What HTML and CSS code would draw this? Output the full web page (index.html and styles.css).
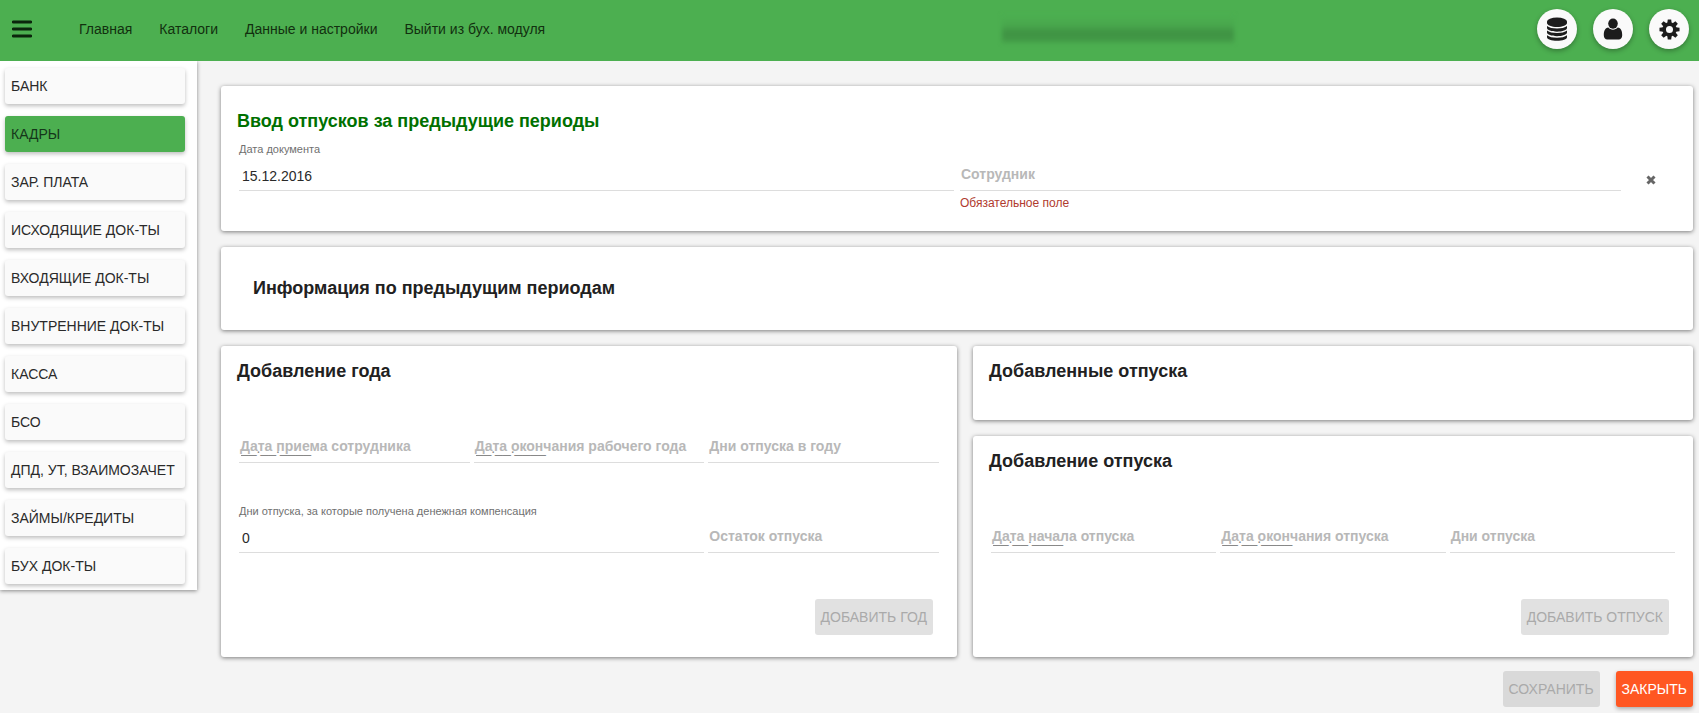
FILE: index.html
```html
<!DOCTYPE html>
<html lang="ru">
<head>
<meta charset="utf-8">
<title>Ввод отпусков за предыдущие периоды</title>
<link rel="stylesheet" href="styles.css">
</head>
<body>
<header class="topbar">
  <button class="menu-button" type="button" aria-label="Меню">
    <svg viewBox="0 0 20 18" width="20" height="18"><path d="M1.200 2h17.600M1.200 9h17.600M1.200 16h17.600" stroke="currentColor" stroke-width="3" stroke-linecap="round"/></svg>
  </button>
  <nav class="topnav">
    <a href="#">Главная</a>
    <a href="#">Каталоги</a>
    <a href="#">Данные и настройки</a>
    <a href="#">Выйти из бух. модуля</a>
  </nav>
  <div class="account"><span class="account-blur"></span></div>
  <div class="round-buttons">
    <button class="round" type="button" aria-label="Базы данных">
      <svg viewBox="0 0 22 24" width="22" height="24"><g fill="currentColor"><ellipse cx="11" cy="4.500" rx="10" ry="4"/><path d="M1 4.500h20v1.500c0 2.200-4.500 4-10 4S1 8.200 1 6z"/><path d="M1 9c2 1.700 5.800 2.500 10 2.500S19 10.700 21 9v2c0 2-4.500 3.700-10 3.700S1 13 1 11z"/><path d="M1 13.600c2 1.700 5.800 2.500 10 2.500s8-.8 10-2.500v2c0 2-4.500 3.700-10 3.700S1 17.600 1 15.600z"/><path d="M1 18.200c2 1.700 5.800 2.500 10 2.500s8-.8 10-2.500v2c0 2-4.500 3.600-10 3.600S1 22.200 1 20.200z"/></g></svg>
    </button>
    <button class="round" type="button" aria-label="Профиль">
      <svg viewBox="0 0 20 22" width="20" height="22"><g fill="currentColor"><ellipse cx="10" cy="5.600" rx="4.800" ry="5.100"/><path d="M5.300 9.600C2 9.900.8 13.200.8 17.300c0 2.400 1.300 4.200 3.500 4.200h11.400c2.200 0 3.500-1.800 3.500-4.200 0-4.100-1.200-7.400-4.500-7.700-1.200 1.300-2.800 2.100-4.700 2.100s-3.500-.8-4.700-2.100z"/></g></svg>
    </button>
    <button class="round" type="button" aria-label="Настройки">
      <svg viewBox="0 0 22 22" width="21" height="21"><circle cx="11" cy="11" r="5.600" fill="none" stroke="currentColor" stroke-width="3.800"/><g fill="currentColor"><path id="tooth" d="M9.200.5h3.600l.5 4H8.700z"/><use href="#tooth" transform="rotate(45 11 11)"/><use href="#tooth" transform="rotate(90 11 11)"/><use href="#tooth" transform="rotate(135 11 11)"/><use href="#tooth" transform="rotate(180 11 11)"/><use href="#tooth" transform="rotate(225 11 11)"/><use href="#tooth" transform="rotate(270 11 11)"/><use href="#tooth" transform="rotate(315 11 11)"/></g></svg>
    </button>
  </div>
</header>
<div class="layout">
  <nav class="sidebar">
    <button class="side-item" type="button">БАНК</button>
    <button class="side-item active" type="button">КАДРЫ</button>
    <button class="side-item" type="button">ЗАР. ПЛАТА</button>
    <button class="side-item" type="button">ИСХОДЯЩИЕ ДОК-ТЫ</button>
    <button class="side-item" type="button">ВХОДЯЩИЕ ДОК-ТЫ</button>
    <button class="side-item" type="button">ВНУТРЕННИЕ ДОК-ТЫ</button>
    <button class="side-item" type="button">КАССА</button>
    <button class="side-item" type="button">БСО</button>
    <button class="side-item" type="button">ДПД, УТ, ВЗАИМОЗАЧЕТ</button>
    <button class="side-item" type="button">ЗАЙМЫ/КРЕДИТЫ</button>
    <button class="side-item" type="button">БУХ ДОК-ТЫ</button>
  </nav>
  <main class="content">
    <section class="card document">
      <h1 class="title primary">Ввод отпусков за предыдущие периоды</h1>
      <div class="document-row">
        <div class="field">
          <label class="float-label" for="doc-date">Дата документа</label>
          <input class="line-input" id="doc-date" type="text" value="15.12.2016">
        </div>
        <div class="field">
          <label class="inner-label" for="employee">Сотрудник</label>
          <input class="line-input" id="employee" type="text">
          <p class="error">Обязательное поле</p>
        </div>
        <button class="clear" type="button" aria-label="Очистить">
          <svg viewBox="0 0 10 10" width="10" height="10"><path d="M1.500 1.500l7 7M8.500 1.500l-7 7" stroke="currentColor" stroke-width="3"/></svg>
        </button>
      </div>
    </section>
    <section class="card periods">
      <h2 class="title">Информация по предыдущим периодам</h2>
    </section>
    <div class="columns">
      <section class="card form-card">
        <h2 class="title">Добавление года</h2>
        <div class="field-grid">
          <div class="field">
            <label class="inner-label" for="hire-date">Дата приема сотрудника</label>
            <input class="line-input mask" id="hire-date" type="text" value="__.__.____">
          </div>
          <div class="field">
            <label class="inner-label" for="year-end">Дата окончания рабочего года</label>
            <input class="line-input mask" id="year-end" type="text" value="__.__.____">
          </div>
          <div class="field">
            <label class="inner-label" for="year-days">Дни отпуска в году</label>
            <input class="line-input" id="year-days" type="text">
          </div>
          <div class="field wide">
            <label class="float-label" for="compensated">Дни отпуска, за которые получена денежная компенсация</label>
            <input class="line-input" id="compensated" type="text" value="0">
          </div>
          <div class="field">
            <label class="inner-label" for="rest">Остаток отпуска</label>
            <input class="line-input" id="rest" type="text">
          </div>
        </div>
        <div class="card-actions"><button class="button disabled" type="button" disabled>ДОБАВИТЬ ГОД</button></div>
      </section>
      <div class="stack">
        <section class="card added">
          <h2 class="title">Добавленные отпуска</h2>
        </section>
        <section class="card form-card">
          <h2 class="title">Добавление отпуска</h2>
          <div class="field-grid">
            <div class="field">
              <label class="inner-label" for="leave-start">Дата начала отпуска</label>
              <input class="line-input mask" id="leave-start" type="text" value="__.__.____">
            </div>
            <div class="field">
              <label class="inner-label" for="leave-end">Дата окончания отпуска</label>
              <input class="line-input mask" id="leave-end" type="text" value="__.__.____">
            </div>
            <div class="field">
              <label class="inner-label" for="leave-days">Дни отпуска</label>
              <input class="line-input" id="leave-days" type="text">
            </div>
          </div>
          <div class="card-actions"><button class="button disabled" type="button" disabled>ДОБАВИТЬ ОТПУСК</button></div>
        </section>
      </div>
    </div>
    <div class="page-actions">
      <button class="button save" type="button" disabled>СОХРАНИТЬ</button>
      <button class="button close" type="button">ЗАКРЫТЬ</button>
    </div>
  </main>
</div>
</body>
</html>
```
FILE: styles.css
```css
* { box-sizing: border-box; }
body {
  margin: 0;
  min-height: 100vh;
  background: #f4f4f4;
  color: #2a2a2a;
  font-family: "Liberation Sans", Arial, sans-serif;
  font-size: 14px;
}
button, input { font: inherit; color: inherit; }
button { border: 0; cursor: pointer; }

.topbar {
  display: flex;
  align-items: center;
  height: 61px;
  padding: 0 10px 3px 12px;
  background: #4caf50;
}
.menu-button {
  display: flex;
  padding: 0;
  background: none;
  color: #0b260c;
}
.topnav {
  display: flex;
  gap: 27px;
  margin-left: 47px;
}
.topnav a { color: #12300f; text-decoration: none; }
.account {
  display: flex;
  flex: 1;
  justify-content: flex-end;
  margin-right: 303px;
}
.account-blur {
  width: 232px;
  height: 28px;
  background: linear-gradient(#4caf50, #49a84d 35%, #409444 62%, #409444 78%, #46a24a);
  filter: blur(2px);
}
.round-buttons { display: flex; gap: 16px; }
.round {
  display: flex;
  align-items: center;
  justify-content: center;
  width: 40px;
  height: 40px;
  padding: 0;
  border-radius: 50%;
  background: #fafafa;
  color: #1c1c1c;
  box-shadow: 0 2px 5px rgba(0, 0, 0, .3);
}

.layout { display: flex; align-items: flex-start; }
.sidebar {
  display: flex;
  flex-direction: column;
  flex: none;
  gap: 12px;
  width: 197px;
  padding: 7px 12px 6px 5px;
  background: #fff;
  box-shadow: 0 1px 4px rgba(0, 0, 0, .45);
  clip-path: inset(0 -8px -8px 0);
}
.side-item {
  height: 36px;
  padding: 0 6px;
  border-radius: 3px;
  background: #fafafa;
  text-align: left;
  white-space: nowrap;
  box-shadow: 0 2px 4px rgba(0, 0, 0, .26);
}
.side-item.active { background: #4caf50; color: #15361a; }

.content {
  display: flex;
  flex: 1;
  flex-direction: column;
  gap: 16px;
  min-width: 0;
  padding: 25px 6px 6px 24px;
}
.card {
  border-radius: 3px;
  background: #fff;
  box-shadow: 0 1px 4px rgba(0, 0, 0, .5);
}
.title {
  margin: 0;
  color: #212121;
  font-size: 18px;
  font-weight: 700;
  line-height: 24px;
}
.title.primary { color: #007000; }
.document { padding: 23px 16px 20px; }
.document-row {
  display: grid;
  grid-template-columns: 716fr 662fr 48fr;
  gap: 6px;
  padding: 0 2px;
}
.periods { padding: 29px 32px 30px; }

.field {
  display: flex;
  position: relative;
  flex-direction: column;
  min-width: 0;
  padding-top: 28px;
}
.line-input {
  width: 100%;
  height: 30px;
  padding: 0 3px;
  border: 0;
  border-bottom: 1px solid #ddd;
  border-radius: 0;
  background: transparent;
  outline: 0;
}
.mask { padding: 0 2px; color: #888; }
.float-label {
  position: absolute;
  top: 8px;
  left: 0;
  color: #707070;
  font-size: 11px;
  line-height: 16px;
  white-space: nowrap;
}
.inner-label {
  position: absolute;
  top: 32px;
  left: 1px;
  color: #b8b8b8;
  font-weight: 700;
  line-height: 18px;
  white-space: nowrap;
}
.error {
  margin: 4px 0 0;
  color: #b03a2e;
  font-size: 12px;
  line-height: 16px;
}
.clear {
  align-self: start;
  justify-self: center;
  margin-top: 40px;
  padding: 0;
  background: none;
  color: #666;
  line-height: 1;
}

.columns {
  display: grid;
  grid-template-columns: 736fr 720fr;
  gap: 16px;
}
.stack { display: flex; flex-direction: column; gap: 16px; }
.form-card { padding: 13px 16px 22px; }
.added { padding: 13px 16px 37px; }
.field-grid {
  display: grid;
  grid-template-columns: repeat(3, 1fr);
  gap: 32px 4px;
  margin-top: 22px;
  padding: 0 2px;
}
.wide { grid-column: span 2; }
.card-actions {
  display: flex;
  justify-content: flex-end;
  margin-top: 46px;
  padding-right: 8px;
}
.button {
  height: 36px;
  padding: 0 6px;
  border-radius: 3px;
  white-space: nowrap;
}
.disabled { background: #e1e1e1; color: #aaa; }
.page-actions {
  display: flex;
  justify-content: flex-end;
  gap: 16px;
  margin-top: -2px;
}
.save { background: #d9d9d9; color: #aaa; }
.close {
  background: #ff5722;
  color: #fff;
  box-shadow: 0 2px 4px rgba(0, 0, 0, .3);
}
```
